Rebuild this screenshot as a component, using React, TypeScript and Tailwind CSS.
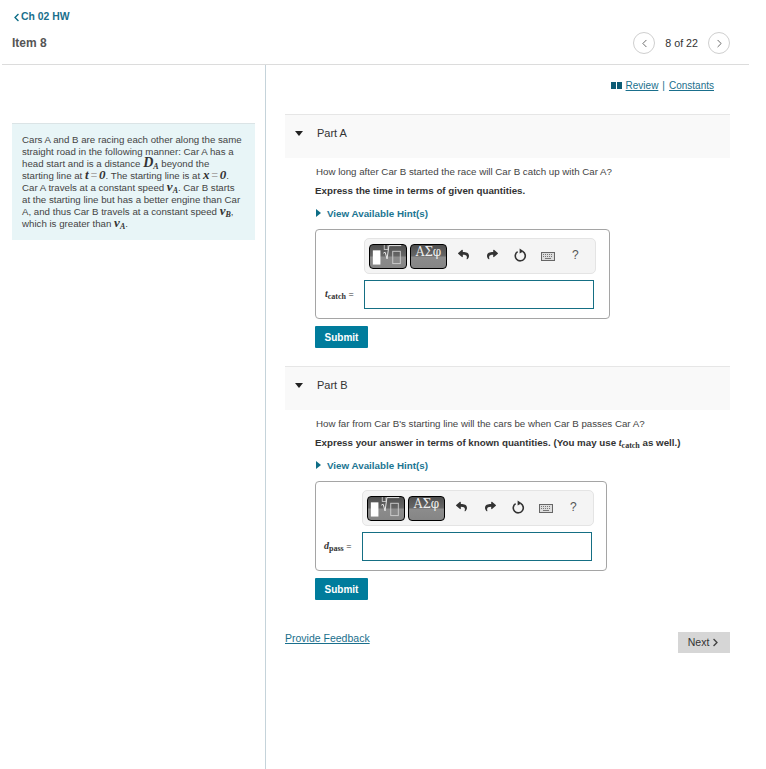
import React from 'react';
import { FaReply, FaShare, FaChevronLeft, FaChevronRight } from 'react-icons/fa';
import { ChevronLeft, ChevronRight } from 'lucide-react';

const sans = { fontFamily: '"Liberation Sans", Arial, sans-serif' };

const Serif: React.FC<{ v: string; sub?: string; size?: string }> = ({ v, sub, size = 'text-[13px]' }) => (
  <span className={`inline-block h-[10px] leading-[10px] font-['Liberation_Serif',serif] ${size} text-[#333]`}>
    <i className="font-bold">{v}</i>
    {sub && <i className="text-[8px] font-bold align-[-2px] leading-none">{sub}</i>}
  </span>
);

const Eq = () => <span className="mx-[2px] text-[11px] leading-none text-[#aaa]">=</span>;

const TemplateIcon = () => (
  <svg width="38" height="25" viewBox="0 0 38 25" className="block">
    <rect x="3" y="6" width="8" height="15" fill="#fff" />
    <path d="M14 9 L16 8 L18 15 L20 1 L33 1" fill="none" stroke="#eee" strokeWidth="1" />
    <rect x="15" y="0" width="4" height="5" fill="none" stroke="#ddd" strokeWidth="0.8" />
    <rect x="24" y="7" width="8" height="13" fill="none" stroke="#ccc" strokeWidth="1" />
  </svg>
);

const KeyboardIcon = () => (
  <svg width="14" height="9" viewBox="0 0 14 9" className="block">
    <rect x="0.5" y="0.5" width="13" height="8" fill="#ddd" stroke="#666" />
    <path d="M2 2.5h10M2 4.5h10" stroke="#777" strokeWidth="1" strokeDasharray="1 1" />
    <path d="M4 6.5h6" stroke="#777" strokeWidth="1" />
  </svg>
);

const ResetIcon = () => (
  <svg width="13" height="14" viewBox="0 0 13 14" className="block">
    <path d="M8.6 3.4 A5 5 0 1 1 3.6 3.6" fill="none" stroke="#333" strokeWidth="1.6" />
    <path d="M5.6 0.4 L9.8 3.3 L5.6 5.6 Z" fill="#333" />
  </svg>
);

const gradient = 'bg-[linear-gradient(#4f4f4f_0%,#666_48%,#8c8c8c_52%,#858585_100%)]';

const Toolbar = () => (
  <div className="w-[232px] h-[36px] bg-[#f4f4f4] border border-[#e4e4e4] rounded-[5px] flex items-center pl-[3px]">
    <div className={`w-[38px] h-[25px] rounded-[4px] border border-black ${gradient} ml-[1px] overflow-hidden flex items-center justify-center`}>
      <TemplateIcon />
    </div>
    <div className={`w-[37px] h-[25px] rounded-[4px] border border-black ${gradient} ml-[3px] text-[#eee] text-[12px] leading-[15px] text-center font-['DejaVu_Serif',serif]`}>
      ΑΣφ
    </div>
    <div className="ml-[10px] w-[12px] -mt-[4px] flex justify-center text-[#333]"><FaReply size={11} /></div>
    <div className="ml-[17px] w-[12px] -mt-[4px] flex justify-center text-[#333]"><FaShare size={11} /></div>
    <div className="ml-[15px] w-[14px] -mt-[2px] flex justify-center"><ResetIcon /></div>
    <div className="ml-[14px] w-[14px]"><KeyboardIcon /></div>
    <div className="ml-[17px] w-[10px] -mt-[3px] text-[12px] text-[#555] leading-none">?</div>
  </div>
);

const HintLink = () => (
  <div className="flex items-center pl-[31px] h-[14px] mt-[10px]">
    <span className="w-0 h-0 border-y-[4px] border-y-transparent border-l-[5px] border-l-[#0d6d86] -mt-[2px]" />
    <span className="ml-[6px] text-[9.8px] font-bold text-[#1b7592]">View Available Hint(s)</span>
  </div>
);

const Part: React.FC<{
  title: string;
  question: string;
  instruction: React.ReactNode;
  label: React.ReactNode;
  labelWidth: string;
  boxWidth: string;
}> = ({ title, question, instruction, label, labelWidth, boxWidth }) => (
  <section>
    <div className="h-[44px] bg-[#f9f9f9] border-t border-[#e6e6e6] flex items-center">
      <span className="ml-[10px] w-0 h-0 border-x-[4.5px] border-x-transparent border-t-[5px] border-t-[#222] -mt-[6px]" />
      <span className="ml-[14px] text-[11px] text-[#333] -mt-[6px]">{title}</span>
    </div>
    <p className="pl-[31px] mt-[7px] h-[13px] text-[9.73px] leading-[13px] text-[#444] whitespace-nowrap">{question}</p>
    <p className="pl-[30px] mt-[6px] h-[13px] text-[9.75px] leading-[13px] font-bold text-[#333] whitespace-nowrap">{instruction}</p>
    <HintLink />
    <div className={`ml-[30px] mt-[8px] h-[90px] ${boxWidth} border border-[#a5a5a5] rounded-[4px] pt-[8px] flex flex-col`}>
      <div className={`${labelWidth} flex`}>
        <Toolbar />
      </div>
      <div className="flex items-center mt-[6px]">
        <div className="flex items-center pt-[2px]">{label}</div>
        <div className="w-[230px] h-[29px] border border-[#156f84] bg-white" />
      </div>
    </div>
    <button className="ml-[30px] mt-[7px] w-[53px] h-[22px] bg-[#007c9c] rounded-[1px] text-white text-[10px] font-bold">
      Submit
    </button>
  </section>
);

const App: React.FC = () => {
  return (
    <div style={sans} className="w-[766px] min-h-[769px] bg-white flex flex-col">
      <header className="h-[65px] ml-[2px] w-[747px] border-b border-[#dcdcdc] relative flex justify-between">
        <div className="pl-[10px]">
          <div className="flex items-center h-[12px] mt-[11px] text-[10.4px] font-bold text-[#1a6f8c]">
            <FaChevronLeft size={9} className="text-[#0d6d86]" />
            Ch 02 HW
          </div>
          <div className="mt-[13px] text-[12px] font-bold text-[#555] leading-[14px]">Item 8</div>
        </div>
        <div className="flex items-center h-[22px] mt-[32px] pr-[19px]">
          <span className="w-[22px] h-[22px] rounded-full border border-[#cfcfcf] flex items-center justify-center text-[#555]">
            <ChevronLeft size={13} strokeWidth={1.6} />
          </span>
          <span className="mx-[10px] text-[10.7px] text-[#333]">8 of 22</span>
          <span className="w-[22px] h-[22px] rounded-full border border-[#cfcfcf] flex items-center justify-center text-[#555]">
            <ChevronRight size={13} strokeWidth={1.6} />
          </span>
        </div>
      </header>

      <div className="flex flex-1">
        <aside className="w-[266px] shrink-0 border-r border-[#c5d3da] pl-[12px] pt-[58px]">
          <div className="w-[243px] h-[117px] bg-[#e8f5f7] border-t border-[#dbe4e6] pl-[10px] pt-[10px] text-[9.7px] text-[#444] [&>div]:h-[12px] [&>div]:leading-[12px] [&>div]:whitespace-nowrap">
            <div>Cars A and B are racing each other along the same</div>
            <div>straight road in the following manner: Car A has a</div>
            <div>head start and is a distance <Serif v="D" sub="A" size="text-[14px]" /> beyond the</div>
            <div>starting line at <Serif v="t" /><Eq /><Serif v="0" />. The starting line is at <Serif v="x" /><Eq /><Serif v="0" />.</div>
            <div>Car A travels at a constant speed <Serif v="v" sub="A" />. Car B starts</div>
            <div>at the starting line but has a better engine than Car</div>
            <div>A, and thus Car B travels at a constant speed <Serif v="v" sub="B" />,</div>
            <div>which is greater than <Serif v="v" sub="A" />.</div>
          </div>
        </aside>

        <main className="w-[445px] ml-[19px]">
          <div className="h-[49px] pr-[16px] flex items-start justify-end pt-[15px] text-[10px] leading-[12px] text-[#1a6f8c]">
            <svg width="11" height="7" viewBox="0 0 11 7" className="mt-[2px]">
              <path d="M0 0h5v7H0zM6 0h5v7H6z" fill="#0d5c75" />
            </svg>
            <a className="underline ml-[4px]">Review</a>
            <span className="mx-[4px]">|</span>
            <a className="underline">Constants</a>
          </div>

          <Part
            title="Part A"
            question="How long after Car B started the race will Car B catch up with Car A?"
            instruction="Express the time in terms of given quantities."
            labelWidth="pl-[48px]"
            boxWidth="w-[295px]"
            label={
              <span className="w-[48px] pl-[9px] whitespace-nowrap text-[9px] text-[#333]">
                <Serif v="t" size="text-[10px]" /><span className="font-['Liberation_Serif',serif] font-bold text-[8px] align-[-2px] text-[#333]">catch</span> =
              </span>
            }
          />
          <div className="h-[18px]" />
          <Part
            title="Part B"
            question="How far from Car B's starting line will the cars be when Car B passes Car A?"
            instruction={
              <>
                Express your answer in terms of known quantities. (You may use{' '}
                <Serif v="t" size="text-[10px]" /><span className="font-['Liberation_Serif',serif] text-[8px] align-[-2px]">catch</span> as well.)
              </>
            }
            labelWidth="pl-[46px]"
            boxWidth="w-[292px]"
            label={
              <span className="w-[46px] pl-[8px] whitespace-nowrap text-[9px] text-[#333]">
                <Serif v="d" size="text-[10px]" /><span className="font-['Liberation_Serif',serif] font-bold text-[8px] align-[-2px] text-[#333]">pass</span> =
              </span>
            }
          />

          <div className="flex justify-between items-start mt-[22px]">
            <a className="mt-[10px] text-[10.5px] leading-[13px] underline text-[#1a6f8c]">Provide Feedback</a>
            <button className="mt-[10px] w-[52px] h-[21px] bg-[#d6d6d6] text-[10.5px] text-[#333] flex items-center justify-center">
              Next
              <FaChevronRight size={9} className="ml-[2px] text-[#444]" />
            </button>
          </div>
        </main>
      </div>
    </div>
  );
};

export default App;
